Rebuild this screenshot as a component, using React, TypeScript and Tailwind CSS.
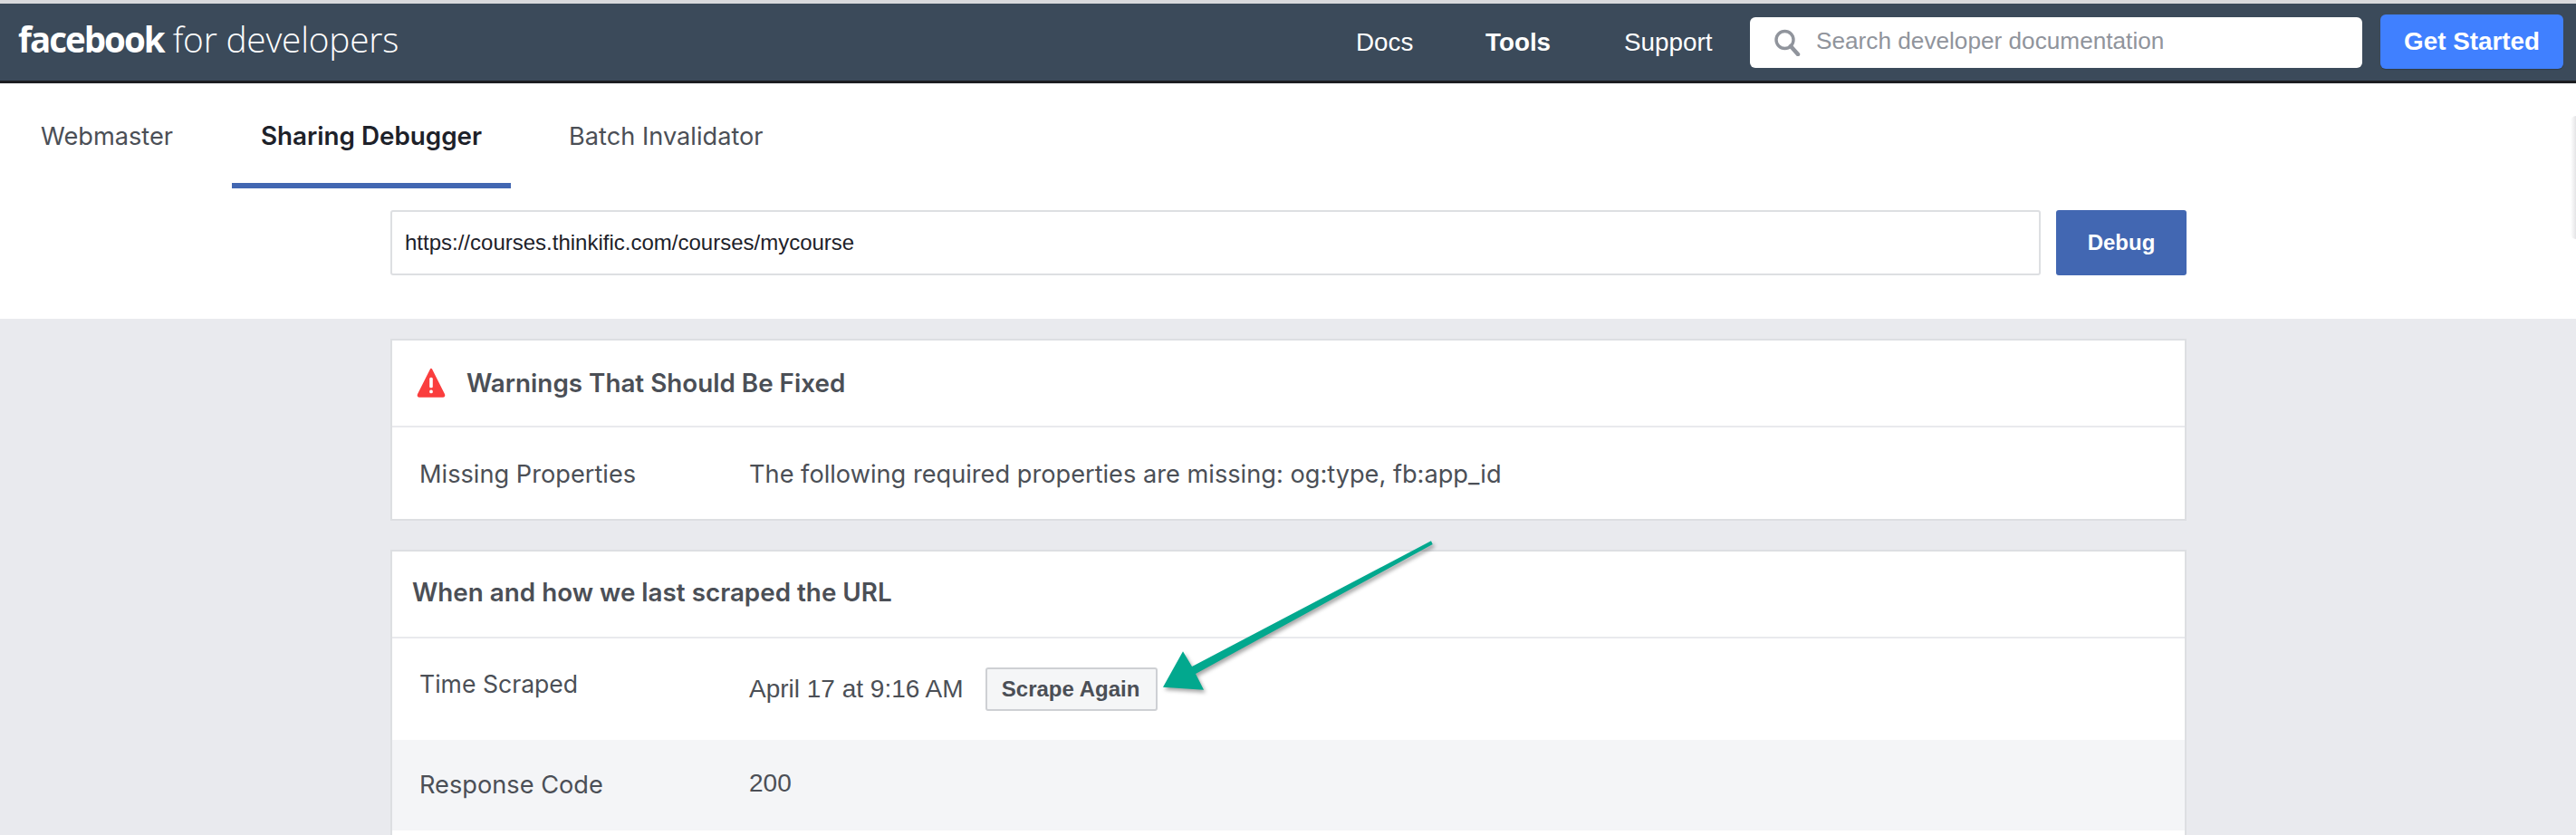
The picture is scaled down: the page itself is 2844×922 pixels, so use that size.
export default function App() {
  const sf = "font-['Inter','Liberation_Sans',sans-serif]";
  const hv = "font-['Liberation_Sans',Arial,sans-serif]";
  return (
    <div className="relative h-[922px] w-[2844px] overflow-hidden bg-white">
      <header className="flex h-[92px] items-start border-t-4 border-b-[3px] border-t-[#d9dadd] border-b-[#1c1e21] bg-[#3b4a5a] pl-[20px] text-white">
        <div className="flex h-[85px] items-center pb-[6px] font-['Open_Sans',sans-serif] leading-none">
          <span className="text-[38.5px] font-bold tracking-[-2px]">facebook</span>
          <span className="ml-[10px] text-[38.8px] font-light tracking-[-0.2px]">for developers</span>
        </div>
        <nav className={`${hv} ml-auto flex h-[85px] items-center text-[27.8px]`}>
          <span className="w-[143px]">Docs</span>
          <span className="w-[153px] font-bold">Tools</span>
          <span className="w-[139px]">Support</span>
          <div className="mr-[20px] flex h-[56px] w-[676px] items-center rounded-[6px] bg-white pl-[26px] text-[26.2px] text-[#90949c]">
            <svg width="30" height="30" viewBox="0 0 30 30" fill="none" stroke="#90949c" strokeWidth="3.4">
              <circle cx="12.5" cy="12" r="9.5" />
              <path d="M19 19l8 9" strokeWidth="4.5" strokeLinecap="round" />
            </svg>
            <span className="ml-[17px] mb-[1px]">Search developer documentation</span>
          </div>
          <button className="mr-[14px] mb-[2px] flex h-[60px] w-[202px] items-center justify-center rounded-[6px] bg-[#4080ff] text-[27.8px] font-bold text-white shadow-[0_1px_1px_rgba(0,0,0,0.2)]">
            Get Started
          </button>
        </nav>
      </header>

      <section className="h-[260px] bg-white">
        <div className={`${sf} flex h-[116px] text-[27.2px] text-[#4b4f56]`}>
          <div className="flex h-full w-[256px] items-center pt-[2px] pl-[45px]">Webmaster</div>
          <div className="flex h-full w-[308px] items-center justify-center border-b-[6px] border-[#4267b2] pt-[8px] text-[27.8px] font-semibold text-[#1d2129]">
            Sharing Debugger
          </div>
          <div className="ml-[64px] flex h-full items-center pt-[2px]">Batch Invalidator</div>
        </div>
        <div className="mt-[24px] ml-[431px] flex w-[1983px] gap-[17px]">
          <div className={`${hv} flex h-[72px] flex-1 items-center rounded-[3px] border-2 border-[#dddfe2] pl-[14px] text-[24px] text-[#1d2129]`}>
            https://courses.thinkific.com/courses/mycourse
          </div>
          <button className={`${hv} h-[72px] w-[144px] rounded-[3px] bg-[#4267b2] text-[24px] font-bold text-white`}>Debug</button>
        </div>
      </section>

      <main className={`${sf} h-[570px] bg-[#e9eaee] pt-[22px] text-[27.2px] text-[#4b4f56]`}>
        <div className="ml-[431px] w-[1983px] border-2 border-[#dddfe2] bg-white">
          <div className="flex h-[96px] items-center border-b-2 border-[#e9eaed] pt-[2px] pl-[27px] text-[27.8px] font-semibold">
            <svg width="32" height="33" viewBox="0 0 32 31" className="mb-[4px]" preserveAspectRatio="none">
              <path d="M16 2 L30 28 Q30.5 29.5 29 29.5 L3 29.5 Q1.5 29.5 2 28 Z" fill="#fa3e3e" stroke="#fa3e3e" strokeWidth="2.4" strokeLinejoin="round" />
              <rect x="14.2" y="10" width="3.6" height="11" rx="1.5" fill="#fff" />
              <rect x="14.2" y="23" width="3.6" height="3.6" rx="1.5" fill="#fff" />
            </svg>
            <span className="ml-[23px]">Warnings That Should Be Fixed</span>
          </div>
          <div className="flex h-[101px] items-center pt-[4px] pl-[30px]">
            <span className="w-[364px]">Missing Properties</span>
            <span>The following required properties are missing: og:type, fb:app_id</span>
          </div>
        </div>

        <div className="mt-[32px] ml-[431px] w-[1983px] border-x-2 border-t-2 border-[#dddfe2] bg-white">
          <div className="flex h-[96px] items-center border-b-2 border-[#e9eaed] pb-[2px] pl-[22px] text-[27.8px] font-semibold">When and how we last scraped the URL</div>
          <div className="flex h-[112px] items-center pl-[30px]">
            <span className="mb-[10px] w-[364px] text-[26.6px]">Time Scraped</span>
            <span className={`${hv} text-[28px]`}>April 17 at 9:16 AM</span>
            <button className={`${hv} ml-[24px] h-[48px] w-[190px] rounded-[3px] border-2 border-[#ced0d4] bg-[#f5f6f7] pr-[1px] text-[24px] font-bold text-[#4b4f56]`}>Scrape Again</button>
          </div>
          <div className="flex h-[100px] items-center bg-[#f4f5f7] pl-[30px]">
            <span className="w-[364px]">Response Code</span>
            <span className={`${hv} mb-[4px] text-[28px]`}>200</span>
          </div>
          <div className="h-[10px] bg-white" />
        </div>
      </main>

      <div className="pointer-events-none absolute top-[128px] right-0 h-[136px] w-[6px] rounded-l-[6px] bg-gradient-to-l from-[#e4e4e6] to-white" />

      <svg className="pointer-events-none absolute top-[590px] left-[1270px] drop-shadow-[2px_3px_2px_rgba(0,0,0,0.35)]" width="320" height="180" viewBox="1270 590 320 180">
        <path d="M1580 597.3 L1581.7 601 L1320 744 L1329 761.7 L1284 758.7 L1306 719.3 L1316 736 Z" fill="#02a88e" />
      </svg>
    </div>
  );
}
